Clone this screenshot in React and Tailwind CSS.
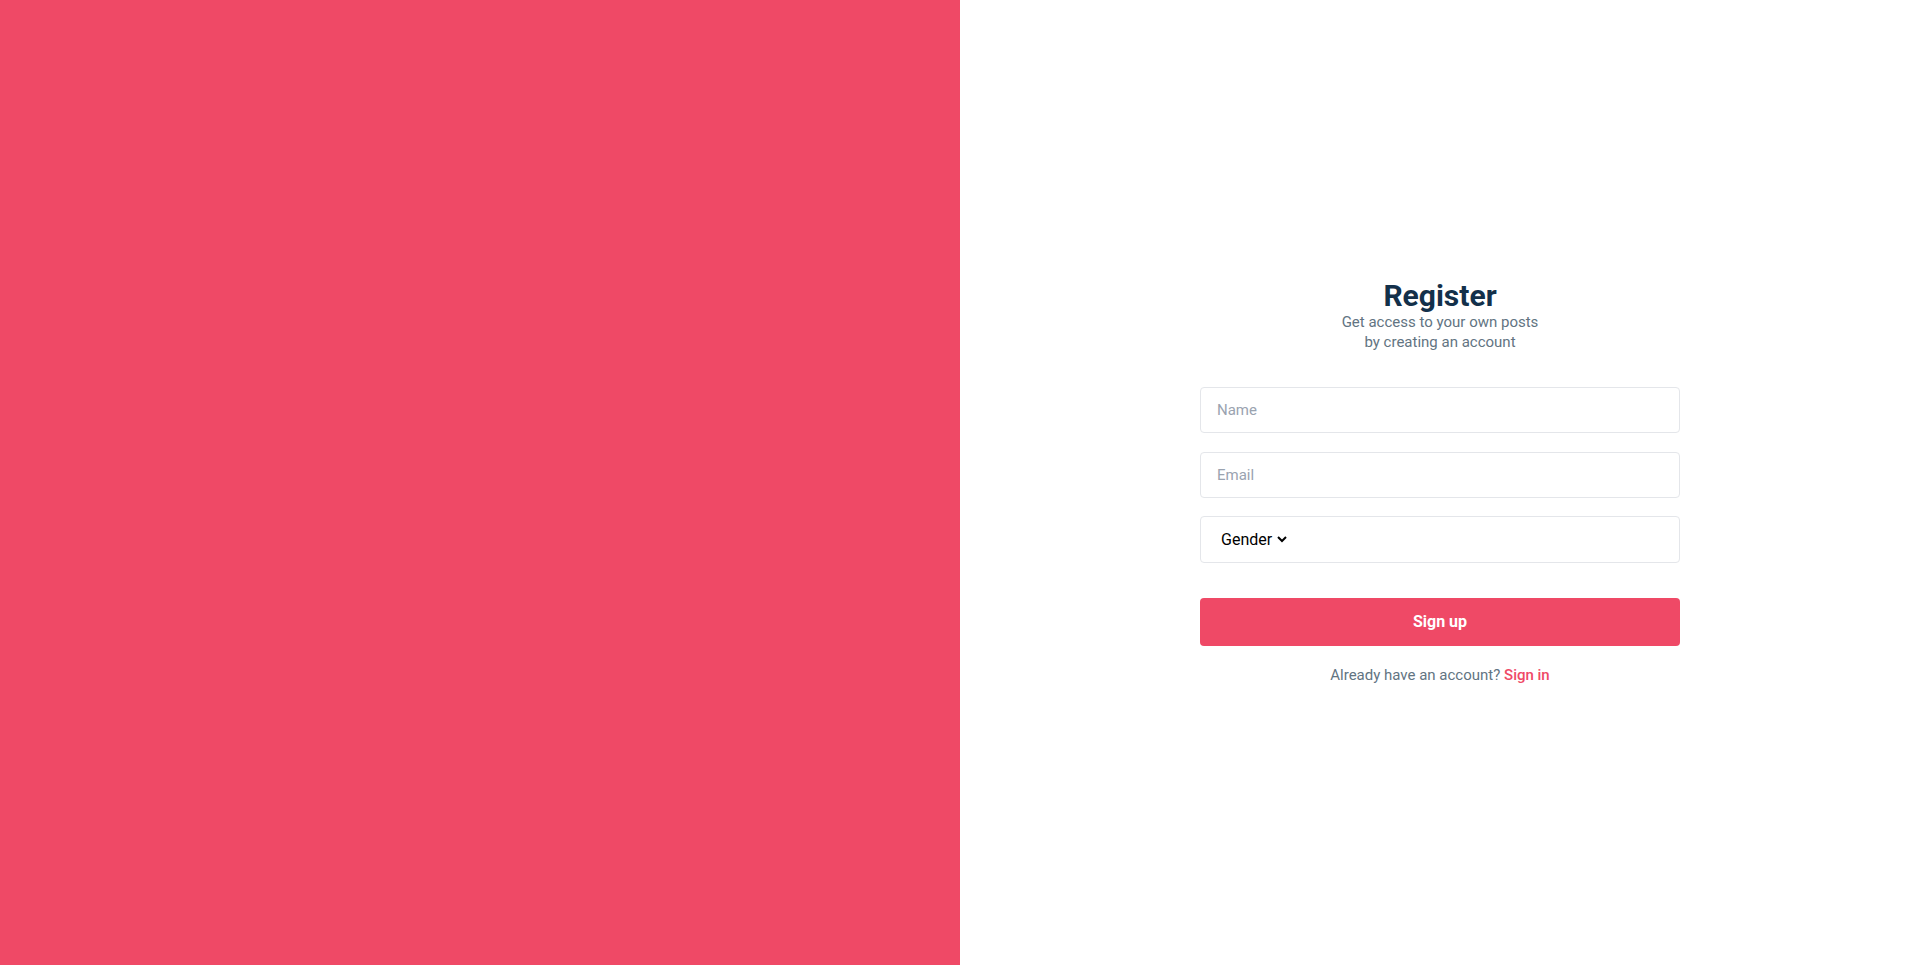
// Register Page
import { useState } from 'react';

const RegisterPage = () => {
    const [form, setForm] = useState({ name: '', email: '', gender: '' });

    const handleChange = (e) => {
        setForm({ ...form, [e.target.name]: e.target.value });
    };

    return (
        <div className="flex h-[965px] w-full font-['Roboto',sans-serif]">
            {/* Left colour panel */}
            <div className="w-[960px] h-full bg-[#ef4966]" />

            {/* Form side */}
            <div className="flex-1 flex items-center justify-center pl-[3px] bg-white">
                <div className="w-[480px]">
                    <div className="text-center">
                        <h1 className="text-[30px] leading-8 font-bold text-[#13304a]">Register</h1>
                        <p className="text-[15px] leading-5 text-[#627482]">
                            Get access to your own posts
                            <br />
                            by creating an account
                        </p>
                    </div>

                    <form className="mt-[35px]" onSubmit={(e) => e.preventDefault()}>
                        <input
                            name="name"
                            value={form.name}
                            onChange={handleChange}
                            placeholder="Name"
                            className="block w-full h-[46px] px-4 text-[15px] border border-[#e4e6ea] rounded-[4px] placeholder:text-[#9aa3b0] outline-none"
                        />
                        <input
                            name="email"
                            value={form.email}
                            onChange={handleChange}
                            placeholder="Email"
                            className="block w-full h-[46px] mt-[19px] px-4 text-[15px] border border-[#e4e6ea] rounded-[4px] placeholder:text-[#9aa3b0] outline-none"
                        />
                        <div className="flex items-center w-full h-[47px] mt-[18px] px-4 border border-[#e4e6ea] rounded-[4px]">
                            <select
                                name="gender"
                                value={form.gender}
                                onChange={handleChange}
                                className="text-base text-black outline-none"
                            >
                                <option value="">Gender</option>
                                <option value="male">Male</option>
                                <option value="female">Female</option>
                            </select>
                        </div>

                        <button
                            type="submit"
                            className="block w-full h-[48px] mt-[35px] rounded-[4px] bg-[#ef4966] text-white text-base font-bold"
                        >
                            Sign up
                        </button>
                    </form>

                    <p className="mt-[19px] text-[15px] leading-5 text-center text-[#627482]">
                        Already have an account?{' '}
                        <a href="#" className="font-medium text-[#ef4966]">Sign in</a>
                    </p>
                </div>
            </div>
        </div>
    );
};

export default RegisterPage;
